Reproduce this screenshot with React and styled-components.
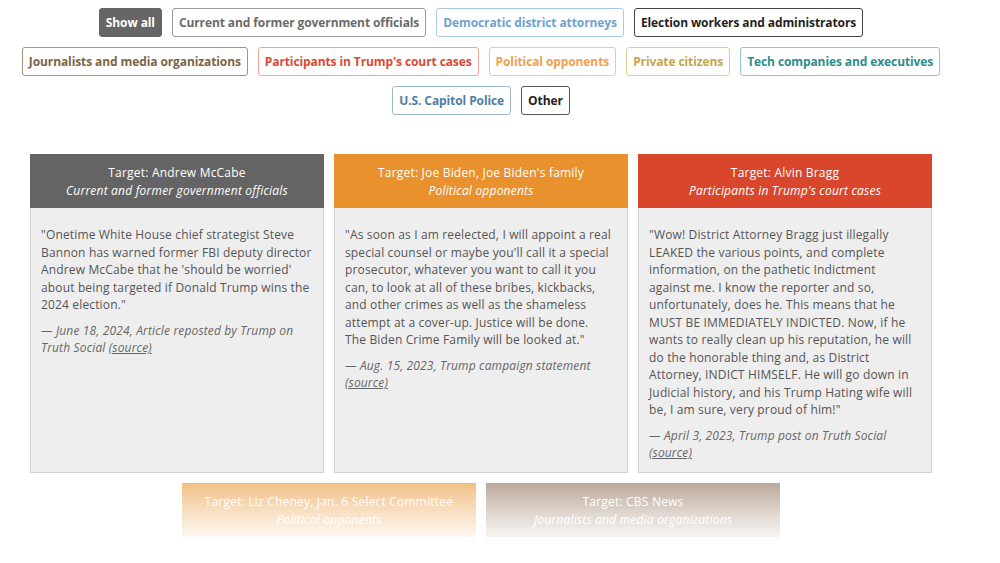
import React from 'react';
import styled, { createGlobalStyle } from 'styled-components';

const GlobalStyle = createGlobalStyle`
  body {
    margin: 0;
    background: #fff;
    font-family: "Open Sans", "Liberation Sans", sans-serif;
  }
`;

const Page = styled.div`
  position: relative;
  width: 962px;
  height: 563px;
  overflow: hidden;
  padding-top: 8px;
  box-sizing: border-box;
`;

const Filters = styled.div`
  display: flex;
  flex-wrap: wrap;
  justify-content: center;
  gap: 10px;
  padding: 0 20px;
`;

const FilterButton = styled.button`
  height: 29px;
  padding: 0 6px;
  border: 1px solid ${(p) => (p.$active ? '#666' : p.$border)};
  border-radius: 3px;
  background: ${(p) => (p.$active ? '#666' : '#fff')};
  color: ${(p) => (p.$active ? '#fff' : p.$color)};
  font-family: "Open Sans", "Liberation Sans", sans-serif;
  font-size: 12px;
  font-weight: 700;
  letter-spacing: -0.1px;
  cursor: pointer;
`;

const Cards = styled.div`
  display: flex;
  flex-wrap: wrap;
  justify-content: center;
  gap: 10px;
  margin-top: 39px;
  padding: 0 30px;
`;

const Card = styled.article`
  width: 294px;
  display: flex;
  flex-direction: column;
  background: #eeeeee;
  border: 1px solid #cfcfcf;
  box-sizing: border-box;
`;

const CardHeader = styled.header`
  background: ${(p) => p.$bg};
  color: #fff;
  text-align: center;
  font-size: 12px;
  line-height: 18px;
  letter-spacing: 0.2px;
  padding: 10px 6px 8px;
  margin: -1px -1px 0;
`;

const Category = styled.div`
  font-style: italic;
`;

const CardBody = styled.div`
  padding: 18px 10px 10px;
  font-size: 12px;
  line-height: 17.5px;
  letter-spacing: 0.15px;
  color: #555;
  flex: 1;
`;

/* quotes keep the line breaks of the original layout */
const Quote = styled.p`
  margin: 0;
  white-space: pre-line;
`;

const Attribution = styled.p`
  margin: 8px 0 0;
  font-style: italic;
  color: #666;

  a {
    color: inherit;
    text-decoration: underline;
  }
`;

const Fade = styled.div`
  position: absolute;
  left: 0;
  right: 0;
  top: 476px;
  bottom: 0;
  background: linear-gradient(rgba(255, 255, 255, 0.35), rgba(255, 255, 255, 0.75) 45%, #fff 80%);
  pointer-events: none;
`;

const filters = [
  { label: 'Show all', active: true },
  { label: 'Current and former government officials', color: '#6b6b6b', border: '#9a9a9a' },
  { label: 'Democratic district attorneys', color: '#6fa3cf', border: '#a9c9e4' },
  { label: 'Election workers and administrators', color: '#1f1f1f', border: '#444' },
  { label: 'Journalists and media organizations', color: '#7d6443', border: '#a8937a' },
  { label: "Participants in Trump's court cases", color: '#db4a32', border: '#eea59a' },
  { label: 'Political opponents', color: '#f0a050', border: '#f5c79c' },
  { label: 'Private citizens', color: '#c9a548', border: '#e2cd95' },
  { label: 'Tech companies and executives', color: '#2e8c8c', border: '#8fc6c6' },
  { label: 'U.S. Capitol Police', color: '#4f7ea6', border: '#9db8cf' },
  { label: 'Other', color: '#222', border: '#555' },
];

const cards = [
  {
    target: 'Andrew McCabe',
    category: 'Current and former government officials',
    bg: '#646464',
    quote: `"Onetime White House chief strategist Steve
Bannon has warned former FBI deputy director
Andrew McCabe that he 'should be worried'
about being targeted if Donald Trump wins the
2024 election."`,
    source: '— June 18, 2024, Article reposted by Trump on Truth Social',
  },
  {
    target: "Joe Biden, Joe Biden's family",
    category: 'Political opponents',
    bg: '#e8912d',
    quote: `"As soon as I am reelected, I will appoint a real
special counsel or maybe you'll call it a special
prosecutor, whatever you want to call it you
can, to look at all of these bribes, kickbacks,
and other crimes as well as the shameless
attempt at a cover-up. Justice will be done.
The Biden Crime Family will be looked at."`,
    source: '— Aug. 15, 2023, Trump campaign statement',
  },
  {
    target: 'Alvin Bragg',
    category: "Participants in Trump's court cases",
    bg: '#d9462b',
    quote: `"Wow! District Attorney Bragg just illegally
LEAKED the various points, and complete
information, on the pathetic Indictment
against me. I know the reporter and so,
unfortunately, does he. This means that he
MUST BE IMMEDIATELY INDICTED. Now, if he
wants to really clean up his reputation, he will
do the honorable thing and, as District
Attorney, INDICT HIMSELF. He will go down in
Judicial history, and his Trump Hating wife will
be, I am sure, very proud of him!"`,
    source: '— April 3, 2023, Trump post on Truth Social',
  },
  {
    target: 'Liz Cheney, Jan. 6 Select Committee',
    category: 'Political opponents',
    bg: '#e8912d',
    quote: '',
    source: '',
  },
  {
    target: 'CBS News',
    category: 'Journalists and media organizations',
    bg: '#8a6a4f',
    quote: '',
    source: '',
  },
];

export default function App() {
  return (
    <Page>
      <GlobalStyle />
      <Filters>
        {filters.map((f) => (
          <FilterButton key={f.label} $active={f.active} $color={f.color} $border={f.border}>
            {f.label}
          </FilterButton>
        ))}
      </Filters>
      <Cards>
        {cards.map((c) => (
          <Card key={c.target}>
            <CardHeader $bg={c.bg}>
              <div>Target: {c.target}</div>
              <Category>{c.category}</Category>
            </CardHeader>
            <CardBody>
              {c.quote && <Quote>{c.quote}</Quote>}
              {c.source && (
                <Attribution>
                  {c.source} <a href="#">(source)</a>
                </Attribution>
              )}
            </CardBody>
          </Card>
        ))}
      </Cards>
      <Fade />
    </Page>
  );
}
